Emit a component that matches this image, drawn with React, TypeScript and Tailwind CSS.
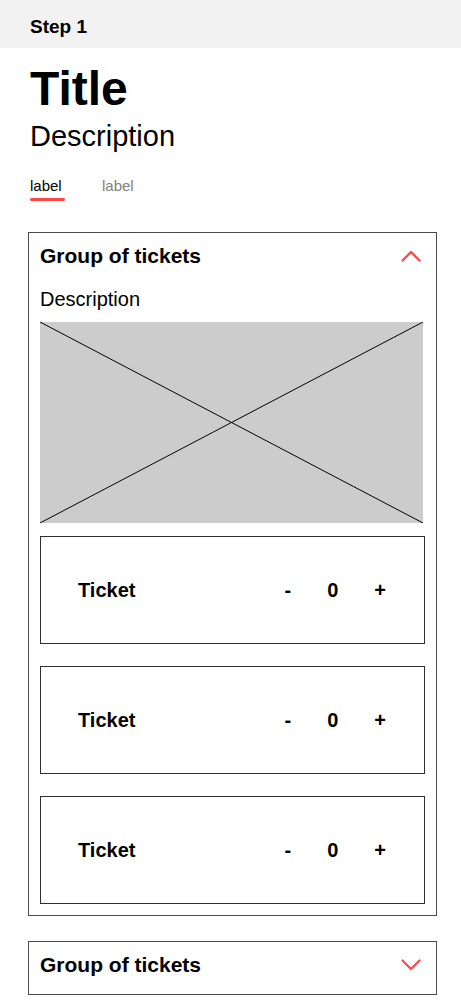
import { useState } from "react";

function Chevron({ up }: { up: boolean }) {
  return (
    <svg width="20" height="12" viewBox="0 0 20 12" className="mr-[4px]" fill="none">
      <path
        d={up ? "M1.5 10.5 L10 2 L18.5 10.5" : "M1.5 1.5 L10 10 L18.5 1.5"}
        stroke="#ff4545"
        strokeWidth="2.2"
        strokeLinecap="round"
        strokeLinejoin="round"
      />
    </svg>
  );
}

function Ticket() {
  return (
    <div className="flex h-[108px] items-center border border-[#2e2e2e] pl-[37px] pr-[38px]">
      <span className="text-[20px] leading-[24px] font-bold">Ticket</span>
      <div className="ml-auto flex items-center gap-[36px] text-[20px] leading-[24px] font-bold">
        <button>-</button>
        <span>0</span>
        <button>+</button>
      </div>
    </div>
  );
}

export default function App() {
  const [tab, setTab] = useState(0);

  return (
    <div className="min-h-screen bg-white text-black font-['Liberation_Sans',Arial,sans-serif]">
      <div className="h-[48px] bg-[#f2f2f2] px-[30px] pt-[16px]">
        <p className="text-[19px] leading-[22px] font-bold">Step 1</p>
      </div>

      <div className="px-[30px]">
        <h1 className="mt-[17px] text-[48px] leading-[48px] font-bold">Title</h1>
        <p className="mt-[6px] text-[29px] leading-[35px]">Description</p>

        <div className="mt-[23px] flex gap-[37px] text-[15px] leading-[18px]">
          {["label", "label"].map((l, i) => (
            <button key={i} onClick={() => setTab(i)} className="flex flex-col items-start">
              <span className={tab === i ? "text-black" : "text-[#808080]"}>{l}</span>
              <span
                className={
                  tab === i
                    ? "mt-[3px] h-[2.5px] w-[35px] rounded-full bg-[#ff4545]"
                    : "mt-[3px] h-[2.5px] w-[35px]"
                }
              />
            </button>
          ))}
        </div>
      </div>

      <section className="mt-[31px] ml-[28px] w-[409px] border-[1.5px] border-[#4a4a4a] px-[11px] pt-[11px] pb-[11px]">
        <div className="flex items-center justify-between">
          <h2 className="text-[21px] leading-[24px] font-bold">Group of tickets</h2>
          <Chevron up />
        </div>
        <p className="mt-[19px] text-[20px] leading-[24px]">Description</p>
        <div className="mt-[11px] h-[201px] w-[383px] bg-[#cccccc]">
          <svg width="100%" height="100%" viewBox="0 0 383 201" preserveAspectRatio="none">
            <line x1="0" y1="0" x2="383" y2="201" stroke="#000" strokeWidth="1" />
            <line x1="383" y1="0" x2="0" y2="201" stroke="#000" strokeWidth="1" />
          </svg>
        </div>
        <div className="mt-[13px] flex flex-col gap-[22px]">
          <Ticket />
          <Ticket />
          <Ticket />
        </div>
      </section>

      <section className="mt-[25px] ml-[28px] h-[54px] w-[409px] border-[1.5px] border-[#4a4a4a] px-[11px] pt-[11px]">
        <div className="flex items-center justify-between">
          <h2 className="text-[21px] leading-[24px] font-bold">Group of tickets</h2>
          <Chevron up={false} />
        </div>
      </section>
    </div>
  );
}
